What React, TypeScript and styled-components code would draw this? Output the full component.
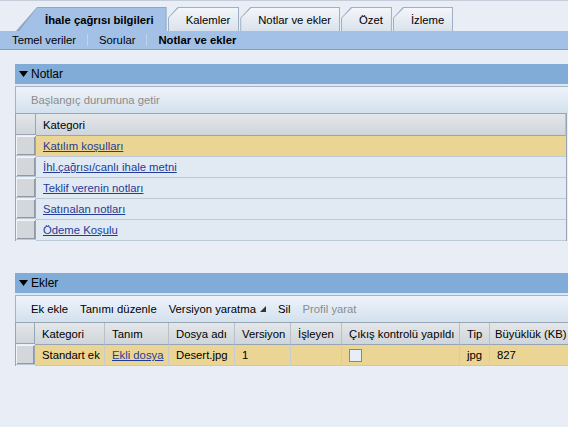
import styled, { createGlobalStyle } from 'styled-components';

const Global = createGlobalStyle`
  html, body {
    margin: 0;
    padding: 0;
    background: #e9eef6;
    font-family: "Liberation Sans", Arial, sans-serif;
    font-size: 11.3px;
    color: #000;
    overflow: hidden;
  }
`;

const Page = styled.div`
  width: 568px;
  height: 427px;
  overflow: hidden;
  border-top: 1px solid #c3ccd8;
  box-sizing: border-box;
`;

const TabStrip = styled.div`
  display: flex;
  align-items: flex-end;
  height: 30px;
  padding-left: 16px;
`;

// active tab has a long slant over full height, the others only a cut corner
const TabOuter = styled.div<{ $active?: boolean }>`
  height: 24px;
  padding: 1px 1px 0 1px;
  margin-left: ${(p) => (p.$active ? 0 : 1)}px;
  background: ${(p) => (p.$active ? '#8fa7c4' : '#9fb0c4')};
  clip-path: ${(p) =>
    p.$active
      ? 'polygon(0 100%, 21px 0, 100% 0, 100% 100%)'
      : 'polygon(0 11px, 10px 0, 100% 0, 100% 100%, 0 100%)'};
  box-sizing: border-box;
`;

const TabFace = styled.div<{ $active?: boolean }>`
  height: 100%;
  display: flex;
  align-items: center;
  padding: 0 ${(p) => (p.$active ? 12 : 8)}px ${(p) => (p.$active ? 3 : 0)}px
    ${(p) => (p.$active ? 28 : 17)}px;
  background: ${(p) =>
    p.$active ? '#a3c0e6' : 'linear-gradient(#f3f6fa, #d9e2ec)'};
  clip-path: ${(p) =>
    p.$active
      ? 'polygon(0 100%, 20px 0, 100% 0, 100% 100%)'
      : 'polygon(0 10px, 10px 0, 100% 0, 100% 100%, 0 100%)'};
  font-weight: ${(p) => (p.$active ? 'bold' : 'normal')};
  white-space: nowrap;
`;

const SubNav = styled.div`
  display: flex;
  align-items: center;
  height: 18px;
  background: #a3c0e6;
  border-bottom: 1px solid #8c9fb6;
  padding-left: 12px;
`;

const SubItem = styled.span<{ $current?: boolean }>`
  font-weight: ${(p) => (p.$current ? 'bold' : 'normal')};
`;

const Sep = styled.span`
  display: inline-block;
  width: 1px;
  height: 12px;
  background: #c2d3ea;
  margin: 0 11px;
`;

const Content = styled.div`
  padding: 14px 0 0 15px;
`;

const Panel = styled.section<{ $gap?: number }>`
  margin-bottom: ${(p) => p.$gap ?? 0}px;
`;

const PanelHeader = styled.div`
  height: 20px;
  background: #81acd8;
  display: flex;
  align-items: center;
  padding-left: 4px;
  gap: 3px;
  border-bottom: 2px solid #dce7f3;
  font-size: 12px;
`;

const Toolbar = styled.div`
  height: 26px;
  display: flex;
  align-items: center;
  padding-left: 15px;
  gap: 12px;
  background: linear-gradient(#eef3fa, #d3e1ee);
  border-top: 1px solid #a6b3c3;
  border-left: 1px solid #a6b3c3;
`;

const ToolButton = styled.span<{ $disabled?: boolean }>`
  color: ${(p) => (p.$disabled ? '#8c8c8c' : '#000')};
  display: inline-flex;
  align-items: center;
  gap: 4px;
  white-space: nowrap;
`;

const Grid = styled.div<{ $cols: string; $width?: string }>`
  display: grid;
  grid-template-columns: ${(p) => p.$cols};
  width: ${(p) => p.$width ?? 'auto'};
  border-top: 1px solid #98a5b5;
  border-left: 1px solid #98a5b5;
  border-right: 1px solid #98a5b5;
`;

const HeadCell = styled.div<{ $last?: boolean }>`
  height: 21px;
  display: flex;
  align-items: center;
  padding-left: ${(p) => (p.$last ? 5 : 7)}px;
  background: linear-gradient(#e4e7ea, #cfd5da);
  border-bottom: 1px solid #98a5b5;
  border-right: ${(p) => (p.$last ? 'none' : '1px solid #b6c1cd')};
  white-space: nowrap;
  overflow: hidden;
`;

const Cell = styled.div<{ $selected?: boolean; $sep?: boolean }>`
  height: 20px;
  display: flex;
  align-items: center;
  padding-left: 7px;
  background: ${(p) => (p.$selected ? '#ead594' : '#e1e9f3')};
  border-bottom: 1px solid #bccad8;
  border-right: ${(p) => (p.$sep ? '1px solid #c4ccd6' : 'none')};
  white-space: nowrap;
  overflow: hidden;
`;

const Selector = styled.div<{ $head?: boolean }>`
  height: ${(p) => (p.$head ? 21 : 20)}px;
  box-sizing: border-box;
  background: ${(p) => (p.$head ? 'linear-gradient(#e4e7ea, #cfd5da)' : '#d3d7db')};
  border-right: 1px solid #98a5b5;
  border-bottom: 1px solid ${(p) => (p.$head ? '#98a5b5' : '#bccad8')};
  box-shadow: ${(p) =>
    p.$head ? 'none' : 'inset 1px 1px 0 #f2f4f6, inset -1px -1px 0 #8f98a3'};
`;

const Link = styled.a`
  color: #1f3c98;
  text-decoration: underline;
  cursor: pointer;
`;

const Check = styled.span`
  width: 11px;
  height: 11px;
  border: 1px solid #7f8894;
  background: #e6eef8;
  display: inline-block;
`;

const Arrow = () => (
  <svg width="9" height="7" viewBox="0 0 9 7">
    <path d="M0 0 H9 L4.5 6 Z" fill="#000" />
  </svg>
);

const Corner = () => (
  <svg width="6" height="6" viewBox="0 0 6 6">
    <path d="M6 0 V6 H0 Z" fill="#333" />
  </svg>
);

const tabs = ['Kalemler', 'Notlar ve ekler', 'Özet', 'İzleme'];

const notes = [
  'Katılım koşulları',
  'İhl.çağrısı/canlı ihale metni',
  'Teklif verenin notları',
  'Satınalan notları',
  'Ödeme Koşulu',
];

const attachCols = [
  'Kategori',
  'Tanım',
  'Dosya adı',
  'Versiyon',
  'İşleyen',
  'Çıkış kontrolü yapıldı',
  'Tip',
  'Büyüklük (KB)',
];

export default function App() {
  return (
    <Page>
      <Global />
      <TabStrip>
        <TabOuter $active>
          <TabFace $active>İhale çağrısı bilgileri</TabFace>
        </TabOuter>
        {tabs.map((t) => (
          <TabOuter key={t}>
            <TabFace>{t}</TabFace>
          </TabOuter>
        ))}
      </TabStrip>
      <SubNav>
        <SubItem>Temel veriler</SubItem>
        <Sep />
        <SubItem>Sorular</SubItem>
        <Sep />
        <SubItem $current>Notlar ve ekler</SubItem>
      </SubNav>

      <Content>
        <Panel $gap={32}>
          <PanelHeader>
            <Arrow />
            Notlar
          </PanelHeader>
          <Toolbar>
            <ToolButton $disabled>Başlangıç durumuna getir</ToolButton>
          </Toolbar>
          <Grid $cols="20px 1fr" $width="550px">
            <Selector $head />
            <HeadCell>Kategori</HeadCell>
            {notes.map((n, i) => [
              <Selector key={n + '-s'} />,
              <Cell key={n} $selected={i === 0}>
                <Link>{n}</Link>
              </Cell>,
            ])}
          </Grid>
        </Panel>

        <Panel>
          <PanelHeader>
            <Arrow />
            Ekler
          </PanelHeader>
          <Toolbar>
            <ToolButton>Ek ekle</ToolButton>
            <ToolButton>Tanımı düzenle</ToolButton>
            <ToolButton>
              Versiyon yaratma <Corner />
            </ToolButton>
            <ToolButton>Sil</ToolButton>
            <ToolButton $disabled>Profil yarat</ToolButton>
          </Toolbar>
          <Grid $cols="19px 70px 64px 66px 56px 51px 118px 30px 100px" $width="600px">
            <Selector $head />
            {attachCols.map((c, i) => (
              <HeadCell key={c} $last={i === attachCols.length - 1}>
                {c}
              </HeadCell>
            ))}
            <Selector />
            <Cell $selected $sep>Standart ek</Cell>
            <Cell $selected $sep>
              <Link>Ekli dosya</Link>
            </Cell>
            <Cell $selected $sep>Desert.jpg</Cell>
            <Cell $selected $sep>1</Cell>
            <Cell $selected $sep />
            <Cell $selected $sep>
              <Check />
            </Cell>
            <Cell $selected $sep>jpg</Cell>
            <Cell $selected>827</Cell>
          </Grid>
        </Panel>
      </Content>
    </Page>
  );
}
